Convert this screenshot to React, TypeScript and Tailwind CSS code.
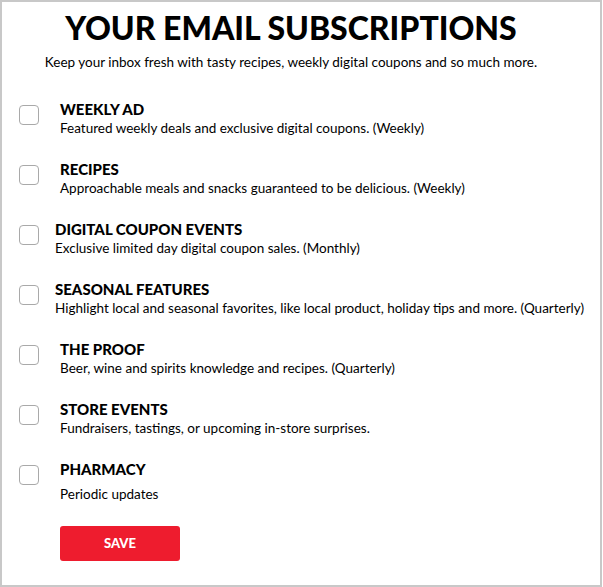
import { useState } from 'react'

type Topic = {
    id: string
    title: string
    blurb: string
    indent: string
    blurbGap?: string
}

const topics: Topic[] = [
    { id: 'weekly-ad', title: 'WEEKLY AD', blurb: 'Featured weekly deals and exclusive digital coupons. (Weekly)', indent: 'ml-[21px]' },
    { id: 'recipes', title: 'RECIPES', blurb: 'Approachable meals and snacks guaranteed to be delicious. (Weekly)', indent: 'ml-[21px]' },
    { id: 'coupon-events', title: 'DIGITAL COUPON EVENTS', blurb: 'Exclusive limited day digital coupon sales. (Monthly)', indent: 'ml-[16px]' },
    { id: 'seasonal', title: 'SEASONAL FEATURES', blurb: 'Highlight local and seasonal favorites, like local product, holiday tips and more. (Quarterly)', indent: 'ml-[16px]' },
    { id: 'the-proof', title: 'THE PROOF', blurb: 'Beer, wine and spirits knowledge and recipes. (Quarterly)', indent: 'ml-[21px]' },
    { id: 'store-events', title: 'STORE EVENTS', blurb: 'Fundraisers, tastings, or upcoming in-store surprises.', indent: 'ml-[21px]' },
    { id: 'pharmacy', title: 'PHARMACY', blurb: 'Periodic updates', indent: 'ml-[21px]', blurbGap: 'mt-[6px]' },
]

function Checkbox({ checked, onToggle }: { checked: boolean; onToggle: () => void }) {
    return (
        <button
            type="button"
            onClick={onToggle}
            className="w-[20px] h-[20px] shrink-0 rounded-[4px] border border-[#a9a9a9] bg-white flex items-center justify-center"
        >
            {checked && (
                <svg viewBox="0 0 16 16" className="w-3 h-3" fill="none" stroke="#222" strokeWidth="2">
                    <path d="M3 8.5l3 3 7-7" />
                </svg>
            )}
        </button>
    )
}

export default function App() {
    const [picked, setPicked] = useState<Record<string, boolean>>({})

    return (
        <div className="w-[602px] h-[587px] border-2 border-[#c8c8c8] bg-white text-black font-['Lato',sans-serif] overflow-hidden">
            <div className="w-[578px] flex flex-col items-center pt-[7px]">
                <h1 className="text-[32px] leading-[38px] font-black">YOUR EMAIL SUBSCRIPTIONS</h1>
                <p className="text-[13.5px] leading-[20px] mt-[5px]">
                    Keep your inbox fresh with tasty recipes, weekly digital coupons and so much more.
                </p>
            </div>

            <ul className="mt-[28px] pl-[17px]">
                {topics.map(t => (
                    <li key={t.id} className="h-[60px] flex items-start">
                        <div className="pt-[5px]">
                            <Checkbox
                                checked={!!picked[t.id]}
                                onToggle={() => setPicked(p => ({ ...p, [t.id]: !p[t.id] }))}
                            />
                        </div>
                        <div className={t.indent}>
                            <h2 className="text-[15px] leading-[18px] font-black">{t.title}</h2>
                            <p className={`text-[13.5px] leading-[20px] whitespace-nowrap ${t.blurbGap ?? ''}`}>{t.blurb}</p>
                        </div>
                    </li>
                ))}
            </ul>

            <div className="pl-[58px] mt-[6px]">
                <button
                    type="button"
                    className="w-[120px] h-[35px] rounded-[3px] bg-[#ee1c2e] text-white text-[13px] font-black"
                >
                    SAVE
                </button>
            </div>
        </div>
    )
}
